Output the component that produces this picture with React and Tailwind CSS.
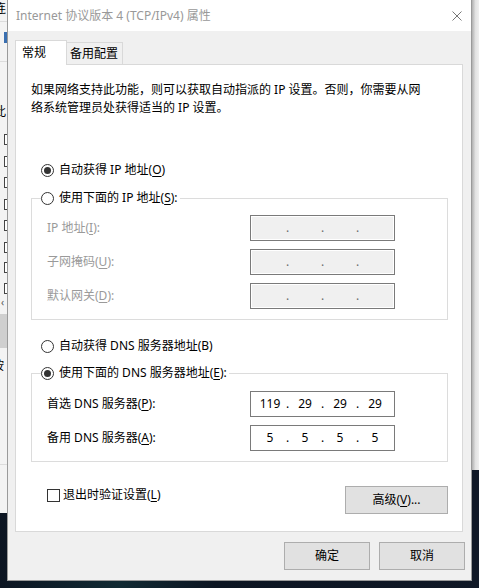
import React from 'react';

// Windows "Internet 协议版本 4 (TCP/IPv4) 属性" dialog

function Radio({ checked, children }) {
  return (
    <div className="flex h-5 items-center">
      <span className="flex h-[13px] w-[13px] shrink-0 items-center justify-center rounded-full border border-[#333] bg-white">
        {checked && <span className="h-[7px] w-[7px] rounded-full bg-[#333]" />}
      </span>
      <span className="ml-[5px] leading-none">{children}</span>
    </div>
  );
}

function IpField({ octets, disabled }) {
  const parts = octets || ['', '', '', ''];
  return (
    <div
      className={`flex h-[26px] w-[145px] items-center border border-[#7a7a7a] pl-[3px] ${
        disabled ? 'bg-[#f0f0f0] shadow-[inset_0_0_0_1px_#ffffff]' : 'bg-white'
      }`}
    >
      {parts.map((p, i) => (
        <React.Fragment key={i}>
          {i > 0 && (
            <span className={`w-[3px] text-center leading-none ${disabled ? 'text-[#6d6d6d]' : 'text-black'}`}>.</span>
          )}
          <span className="w-[32px] text-center leading-none text-black">{p}</span>
        </React.Fragment>
      ))}
    </div>
  );
}

function FieldRow({ label, disabled, octets }) {
  return (
    <div className="flex h-[26px] items-center">
      <span className={`w-[218px] pl-[15px] leading-none ${disabled ? 'text-[#9a9a9a]' : 'text-black'}`}>{label}</span>
      <IpField octets={octets} disabled={disabled} />
    </div>
  );
}

function Key({ children }) {
  return <span className="underline underline-offset-2">{children}</span>;
}

// sliver of the window behind the dialog
function LeftStrip() {
  return (
    <div className="flex h-[513px] w-[7px] shrink-0 flex-col overflow-hidden bg-[#f3f3f3]">
      <div className="flex h-[18px] items-center">
        <span className="-ml-[6px] leading-none">连</span>
      </div>
      <div className="mt-[3px] h-px bg-[#dcdcdc]" />
      <div className="ml-[4px] mt-[10px] h-[11px] w-[3px] bg-[#3a6fb0]" />
      <div className="mt-[18px] h-px bg-[#dcdcdc]" />
      <div className="mt-[41px] flex h-[18px] items-center">
        <span className="-ml-[6px] leading-none">此</span>
      </div>
      {[13, 11, 10, 11, 10, 11, 9, 10].map((m, i) => (
        <div
          key={i}
          style={{ marginTop: m }}
          className="ml-[4px] h-[11px] w-[3px] border-y border-l border-[#444] bg-white"
        />
      ))}
      <div className="ml-[1px] mt-[3px] h-[11px] text-[10px] leading-[11px] text-[#555]">‹</div>
      <div className="mt-[6px] h-[34px] bg-[#cfcfcf]" />
      <div className="mt-[10px] flex h-[16px] items-center">
        <span className="-ml-[8px] leading-none">按</span>
      </div>
      <div className="mt-[90px] h-px bg-[#dcdcdc]" />
    </div>
  );
}

function RightStrip() {
  return (
    <div className="flex w-[7px] shrink-0 flex-col">
      <div className="h-[470px] bg-[linear-gradient(90deg,#b0b0b0,#e2e2e2_50%,#efefef)]" />
    </div>
  );
}

export default function App() {
  return (
    <div className="flex h-[588px] w-[479px] items-start overflow-hidden bg-[linear-gradient(90deg,#0c1522_0%,#112a33_25%,#0c1522_45%,#101826_100%)] font-['Noto_Sans','Noto_Sans_CJK_SC',sans-serif] text-[12px] text-black">
      <LeftStrip />

      <div className="flex h-[581px] w-[465px] shrink-0 flex-col border-x border-b border-[#9a9a9a] bg-[#f0f0f0]">
        {/* title bar */}
        <div className="flex h-[31px] items-center justify-between bg-white pl-[8px] pr-[9px]">
          <span className="leading-none text-[#999]">Internet 协议版本 4 (TCP/IPv4) 属性</span>
          <svg width="10" height="10" viewBox="0 0 10 10" className="text-[#777]">
            <path d="M0.5 0.5 L9.5 9.5 M9.5 0.5 L0.5 9.5" stroke="currentColor" strokeWidth="1" fill="none" />
          </svg>
        </div>

        {/* tabs */}
        <div className="ml-[7px] mt-[9px] flex h-[24px] items-end">
          <div className="relative z-10 -mb-px flex h-[25px] w-[52px] items-center border-x border-t border-[#d9d9d9] bg-white pl-[6px]">
            <span className="leading-none">常规</span>
          </div>
          <div className="flex h-[22px] w-[56px] items-center border-r border-t border-[#d9d9d9] bg-[#f0f0f0] pl-[3px]">
            <span className="leading-none">备用配置</span>
          </div>
        </div>

        {/* tab panel */}
        <div className="ml-[7px] flex h-[468px] w-[448px] flex-col border border-[#d9d9d9] bg-white pl-[15px]">
          <p className="mt-[16px] whitespace-nowrap leading-[18px]">
            如果网络支持此功能，则可以获取自动指派的 IP 设置。否则，你需要从网
            <br />
            络系统管理员处获得适当的 IP 设置。
          </p>

          <div className="ml-[10px] mt-[43px]">
            <Radio checked>
              自动获得 IP 地址(<Key>O</Key>)
            </Radio>
          </div>

          <div className="mt-[18px] flex w-[417px] flex-col border border-[#dcdcdc] pb-[10px]">
            <div className="-mt-[11px] ml-[9px] w-fit bg-white pr-[2px]">
              <Radio>
                使用下面的 IP 地址(<Key>S</Key>):
              </Radio>
            </div>
            <div className="mt-[7px] flex flex-col gap-[8px]">
              <FieldRow disabled label={<>IP 地址(<Key>I</Key>):</>} />
              <FieldRow disabled label={<>子网掩码(<Key>U</Key>):</>} />
              <FieldRow disabled label={<>默认网关(<Key>D</Key>):</>} />
            </div>
          </div>

          <div className="ml-[10px] mt-[16px]">
            <Radio>自动获得 DNS 服务器地址(B)</Radio>
          </div>

          <div className="mt-[17px] flex w-[417px] flex-col border border-[#dcdcdc] pb-[10px]">
            <div className="-mt-[11px] ml-[9px] w-fit bg-white pr-[2px]">
              <Radio checked>
                使用下面的 DNS 服务器地址(<Key>E</Key>):
              </Radio>
            </div>
            <div className="mt-[8px] flex flex-col gap-[8px]">
              <FieldRow label={<>首选 DNS 服务器(<Key>P</Key>):</>} octets={['119', '29', '29', '29']} />
              <FieldRow label={<>备用 DNS 服务器(<Key>A</Key>):</>} octets={['5', '5', '5', '5']} />
            </div>
          </div>

          <div className="mt-[24px] flex w-[417px] items-start justify-between">
            <label className="ml-[16px] mt-[1px] flex h-[16px] items-center">
              <span className="h-[13px] w-[13px] border border-[#333] bg-white" />
              <span className="ml-[3px] leading-none">
                退出时验证设置(<Key>L</Key>)
              </span>
            </label>
            <button className="flex h-[28px] w-[103px] items-center justify-center border border-[#adadad] bg-[#e1e1e1] leading-none">
              高级(<Key>V</Key>)...
            </button>
          </div>
        </div>

        {/* dialog buttons */}
        <div className="mt-[10px] flex justify-end gap-[9px] pr-[6px]">
          <button className="flex h-[28px] w-[86px] items-center justify-center border border-[#adadad] bg-[#e1e1e1] leading-none">
            确定
          </button>
          <button className="flex h-[28px] w-[86px] items-center justify-center border border-[#adadad] bg-[#e1e1e1] leading-none">
            取消
          </button>
        </div>
      </div>

      <RightStrip />
    </div>
  );
}
